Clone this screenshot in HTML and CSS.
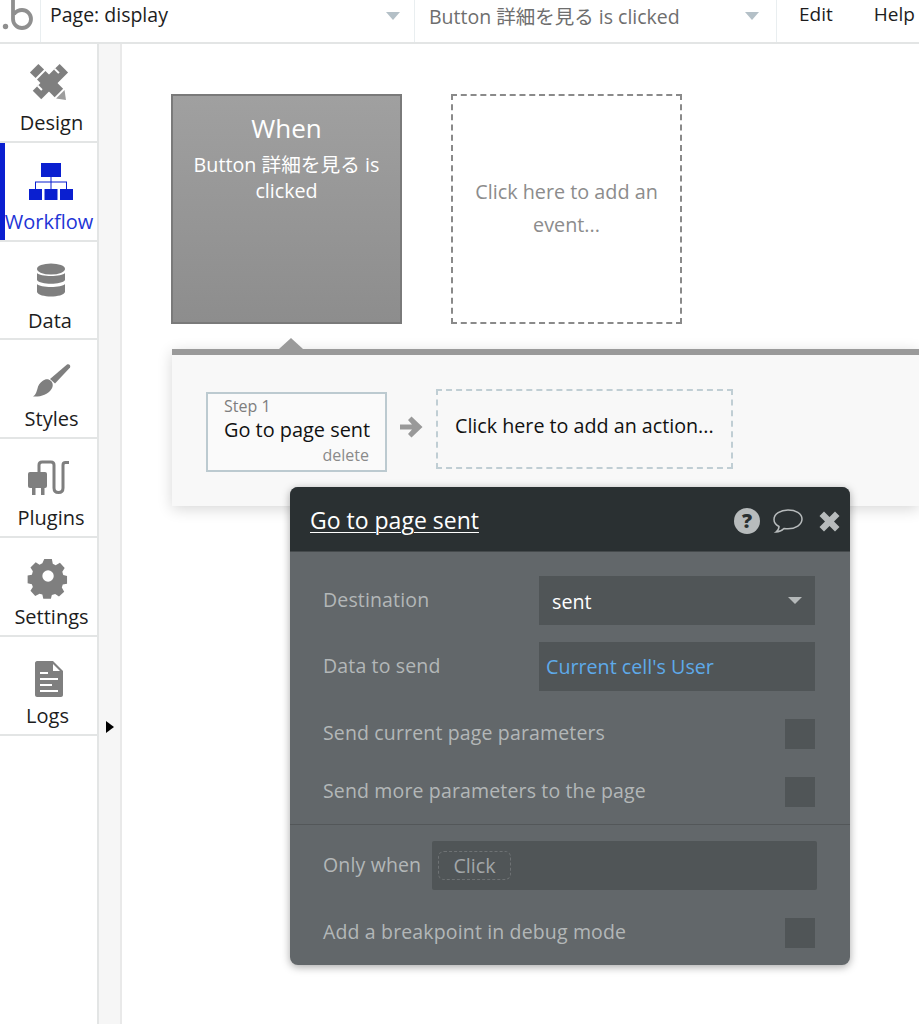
FILE: index.html
```html
<!DOCTYPE html>
<html lang="en">
<head>
<meta charset="utf-8">
<title>Workflow</title>
<link rel="stylesheet" href="styles.css">
</head>
<body>
<header class="topbar">
  <div class="logo">
    <svg width="40" height="42" viewBox="0 0 40 42"><circle cx="5.500" cy="26.500" r="2.700" fill="#8f8f8f"/><path d="M13 0V19a9 9 0 1 0 9-9c-3 0-6 1.500-8 4" fill="none" stroke="#8f8f8f" stroke-width="3.800"/></svg>
  </div>
  <div class="drop page-drop"><span>Page: display</span><i class="caret"></i></div>
  <div class="drop event-drop"><span>Button 詳細を見る is clicked</span><i class="caret"></i></div>
  <nav class="menu"><span>Edit</span><span>Help</span></nav>
</header>
<div class="main">
  <aside class="sidebar">
    <div class="tab tab-design">
      <svg class="icon" width="38" height="38" viewBox="0 0 38 38">
        <g transform="rotate(-45 19 18)" fill="#7f7f7f">
          <rect x="2" y="12" width="38" height="12"/>
          <g fill="#fff"><rect x="8" y="12" width="2" height="6"/><rect x="32" y="12" width="2" height="6"/></g>
        </g>
        <g transform="rotate(45 19 18)">
          <rect x="-2" y="12" width="8" height="12" fill="#7f7f7f"/>
          <rect x="8" y="12" width="25" height="12" fill="#7f7f7f"/>
          <path d="M35 12 43 18 35 24Z" fill="#9d9d9d"/>
        </g>
      </svg>
      <span>Design</span>
    </div>
    <div class="tab active">
      <svg class="icon" width="44" height="38" viewBox="0 2 44 38"><g fill="#0a1fd0"><rect x="12" y="1" width="20" height="14"/><rect x="0" y="27" width="13" height="11"/><rect x="15.500" y="27" width="13" height="11"/><rect x="31" y="27" width="13" height="11"/><path d="M21.500 15h1v4.500H38V27h-1v-6.500H22.500V27h-1v-6.500H7V27H6v-7.500h15.500Z"/></g></svg>
      <span>Workflow</span>
    </div>
    <div class="tab tab-data">
      <svg class="icon" width="30" height="38" viewBox="0 0 30 38"><g fill="#7f7f7f"><ellipse cx="15" cy="6" rx="14" ry="5.500"/><path d="M1 10c3 4 25 4 28 0v7c-3 5-25 5-28 0Z"/><path d="M1 21c3 4 25 4 28 0v8c-2 6-26 6-28 0Z"/></g></svg>
      <span>Data</span>
    </div>
    <div class="tab tab-styles">
      <svg class="icon" width="38" height="38" viewBox="0 -3 38 38"><g fill="#7f7f7f"><path d="M34 .500c2-1 4 1 3 3L22 19.500l-5-4.500Z"/><path d="M9.500 17c3-2.500 6-2.500 8.500 0 2 2 2.500 5 .5 8-4 6-11 8-18.500 7.500 3-1.500 3.500-5 4.500-8 .5-3 2.500-6 5-7.500Z"/></g></svg>
      <span>Styles</span>
    </div>
    <div class="tab tab-plugins">
      <svg class="icon" width="42" height="38" viewBox="0 2 42 38"><g fill="#7f7f7f"><rect x="0" y="14" width="19" height="16" rx="2"/><rect x="4" y="29" width="3.500" height="8"/><rect x="13" y="29" width="3.500" height="8"/></g><path d="M11 14V7q0-3 3-3H23q3 0 3 3V30q0 4.500 4.500 4.500T35 30V7q0-2.500 2.500-2.500H41" fill="none" stroke="#7f7f7f" stroke-width="3"/></svg>
      <span>Plugins</span>
    </div>
    <div class="tab tab-settings">
      <svg class="icon" width="38" height="38" viewBox="0 1 38 38"><path fill="#7f7f7f" fill-rule="evenodd" d="M15 1h8l1 5 3 1.500 4.500-2.500 5 5.500-2.500 4 1 3.500 4 1v8l-4.500 1-1 3 2.500 4.500-5.500 5-4-2.500-3.500 1-1 4h-8l-1-4.500-3-1-4.500 2.500-5-5.500 2.500-4-1-3-4.500-1v-8l4.500-1 1-3.500-2.500-4 5.500-5.500 4 2.500 3-1.500ZM19 13a6 6 0 1 0 0 12 6 6 0 0 0 0-12Z" transform="scale(.95)"/></svg>
      <span>Settings</span>
    </div>
    <div class="tab tab-logs">
      <svg class="icon" width="28" height="38" viewBox="0 -3 28 38"><path fill="#7f7f7f" d="M2 0h16l10 10v24c0 1-1 2-2 2H2c-1 0-2-1-2-2V2C0 1 1 0 2 0Z"/><g fill="#fff"><path d="M18 3l7 7h-7Z"/><rect x="5" y="11" width="8" height="2"/><rect x="5" y="17" width="18" height="2"/><rect x="5" y="23" width="12" height="2"/><rect x="5" y="29" width="18" height="2"/></g></svg>
      <span>Logs</span>
    </div>
  </aside>
  <div class="gutter"><i class="expander"></i></div>
  <main class="canvas">
    <div class="events">
      <div class="event-card selected">
        <div class="when">When</div>
        <div class="when-desc">Button 詳細を見る is clicked</div>
      </div>
      <div class="event-card empty">Click here to add an event...</div>
    </div>
    <section class="actions">
      <i class="notch"></i>
      <div class="step">
        <div class="step-num">Step 1</div>
        <div class="step-name">Go to page sent</div>
        <div class="step-del">delete</div>
      </div>
      <svg class="next" width="24" height="22" viewBox="0 0 24 22"><path fill="#999" d="M0 8.500h12L8 4l3.500-3.500L22.500 11 11.500 21.500 8 18l4-4.500H0Z"/></svg>
      <div class="add-action">Click here to add an action...</div>
    </section>
    <section class="popup">
      <div class="popup-head">
        <span class="popup-title">Go to page sent</span>
        <div class="popup-icons">
          <svg class="help" width="26" height="26" viewBox="0 0 26 26"><circle cx="13" cy="13" r="13" fill="#b7bbbc"/><text x="13" y="20" class="q">?</text></svg>
          <svg width="30" height="26" viewBox="0 0 30 26"><path d="M15 2C7.500 2 1 6 1 11.500c0 3 2 5.500 5 7 0 2-1 4-3 5.500 3 0 6-1.500 8-3.500 1.500.2 2.500.3 4 .3 7.500 0 14-4 14-9.800S22.500 2 15 2Z" fill="none" stroke="#b7bbbc" stroke-width="1.500"/></svg>
          <svg class="close" width="21" height="21" viewBox="0 0 21 21"><path fill="#b7bbbc" d="M5 .5 10.500 6 16 .5 20.500 5 15 10.500 20.500 16 16 20.500 10.500 15 5 20.500.5 16 6 10.500.5 5Z"/></svg>
        </div>
      </div>
      <div class="popup-body">
        <div class="row row-field">
          <label>Destination</label>
          <div class="input select"><span>sent</span><i class="caret light"></i></div>
        </div>
        <div class="row row-field second">
          <label>Data to send</label>
          <div class="input"><span class="link">Current cell's User</span></div>
        </div>
        <div class="row row-check first-check">
          <label>Send current page parameters</label><i class="check"></i>
        </div>
        <div class="row row-check">
          <label>Send more parameters to the page</label><i class="check"></i>
        </div>
        <hr class="divider">
        <div class="row only-when">
          <label>Only when</label>
          <div class="input wide"><span class="click">Click</span></div>
        </div>
        <div class="row row-check last-check">
          <label>Add a breakpoint in debug mode</label><i class="check"></i>
        </div>
      </div>
    </section>
  </main>
</div>
</body>
</html>
```

FILE: styles.css
```css
* { box-sizing: border-box; }
html, body { margin: 0; padding: 0; height: 100%; }
body {
  width: 919px;
  height: 1024px;
  overflow: hidden;
  background: #fff;
  font-family: "Open Sans", "Noto Sans CJK JP", sans-serif;
  color: #1d1d1d;
  display: flex;
  flex-direction: column;
}

/* top bar */
.topbar {
  flex: none;
  height: 44px;
  display: flex;
  border-bottom: 2px solid #e3e5e5;
  font-size: 19px;
  overflow: hidden;
}
.logo {
  width: 41px;
  flex: none;
  border-right: 1px solid #e9eef0;
}
.logo svg { display: block; }
.drop {
  flex: none;
  display: flex;
  align-items: center;
  justify-content: space-between;
  height: 100%;
  border-right: 1px solid #e9eef0;
  padding-bottom: 14px;
  font-size: 19.500px;
}
.page-drop { width: 374px; padding-left: 9px; padding-right: 14px; }
.event-drop { width: 362px; padding-left: 14px; padding-right: 17px; color: #6e6e6e; }
.event-drop span { padding-top: 2px; }
.caret {
  width: 0; height: 0;
  border-left: 7px solid transparent;
  border-right: 7px solid transparent;
  border-top: 8px solid #b4c0c7;
  margin-top: 3px;
}
.caret.light { border-top-color: #b5b9ba; border-top-width: 7px; margin-top: 0; }
.menu {
  flex: none;
  display: flex;
  gap: 41px;
  padding-left: 22px;
  padding-top: 1px;
  white-space: nowrap;
}

/* main */
.main { flex: 1; display: flex; min-height: 0; }
.sidebar { width: 99px; flex: none; border-right: 2px solid #e3e5e5; }
.tab {
  height: 98.800px;
  display: flex;
  flex-direction: column;
  align-items: center;
  border-bottom: 2px solid #e3e5e5;
  font-size: 20px;
  line-height: 27px;
  padding-top: 21px;
  position: relative;
}
.icon { display: block; margin-bottom: 6px; overflow: visible; }
.tab span { margin-left: 6px; }
.tab.active { color: #2234d6; }
.tab.active span { margin-left: 1px; }
.tab.active .icon { margin-left: 4px; }
.tab.active::before {
  content: "";
  position: absolute;
  left: 0; top: 0; bottom: 0;
  width: 5px;
  background: #0a1fd0;
}
.tab-data .icon { margin-left: 4px; }
.tab-data span { margin-left: 3px; }
.tab-styles .icon { margin-left: 7px; }
.tab-plugins .icon, .tab-settings .icon { margin-left: 1px; }
.tab-plugins span { margin-left: 5px; }
.tab-logs span { margin-left: -2px; }
.gutter {
  width: 23px;
  flex: none;
  background: #f6f6f6;
  border-right: 2px solid #e9e9e9;
  position: relative;
}
.expander {
  position: absolute;
  left: 7px;
  top: 677px;
  width: 0; height: 0;
  border-top: 6.500px solid transparent;
  border-bottom: 6.500px solid transparent;
  border-left: 8px solid #000;
}

/* canvas */
.canvas {
  flex: 1;
  min-width: 0;
  position: relative;
  padding-top: 50px;
  overflow: hidden;
}
.events { display: flex; gap: 49px; margin-left: 49px; }
.event-card {
  width: 231px;
  height: 230px;
  flex: none;
  text-align: center;
}
.event-card.selected {
  background: linear-gradient(#a0a0a0, #8d8d8d);
  border: 2px solid #7a7a7a;
  color: #fff;
  padding: 14px 14px 0;
}
.when { font-size: 26px; line-height: 36px; }
.when-desc { font-size: 19.700px; line-height: 26px; margin-top: 6px; }
.event-card.empty {
  border: 2px dashed #8a8a8a;
  color: #8c8c8c;
  font-size: 19.800px;
  line-height: 33px;
  padding: 79px 20px 0;
}
.actions {
  margin: 25px 0 0 50px;
  height: 157px;
  background: #f8f8f8;
  border-top: 6px solid #9a9a9a;
  display: flex;
  align-items: flex-start;
  position: relative;
  box-shadow: 0 3px 14px rgba(0,0,0,.16);
  padding: 37px 0 0 34px;
}
.notch {
  position: absolute;
  left: 107px;
  top: -17px;
  width: 0; height: 0;
  border-left: 12px solid transparent;
  border-right: 12px solid transparent;
  border-bottom: 11px solid #9a9a9a;
}
.step {
  width: 181px;
  height: 80px;
  flex: none;
  border: 2px solid #bccad0;
  background: #fafafa;
  padding: 2px 16px 0 16px;
}
.step-num { font-size: 16px; line-height: 20px; color: #7e7e7e; }
.step-name { font-size: 19.900px; line-height: 27px; color: #111; white-space: nowrap; }
.step-del { font-size: 16px; line-height: 22px; color: #8a8a8a; text-align: right; margin-top: 1px; }
.next { flex: none; margin: 24px 12px 0 13px; }
.add-action {
  width: 297px;
  height: 80px;
  flex: none;
  margin-top: -3px;
  border: 2px dashed #c0ced4;
  color: #111;
  font-size: 19.700px;
  line-height: 70px;
  padding-left: 17px;
  white-space: nowrap;
}

/* popup */
.popup {
  position: absolute;
  left: 168px;
  top: 443px;
  width: 560px;
  height: 478px;
  background: #62676a;
  border-radius: 8px;
  box-shadow: 0 2px 8px rgba(0,0,0,.35);
  overflow: hidden;
  color: #b3b7b8;
  font-size: 19.700px;
}
.popup-head {
  height: 65px;
  background: #2a3032;
  border-bottom: 1px solid #454a4c;
  display: flex;
  align-items: center;
  justify-content: space-between;
  padding: 2px 10px 0 20px;
}
.popup-title { color: #fff; font-size: 23px; text-decoration: underline; text-underline-offset: 3px; text-decoration-thickness: 1px; }
.popup-icons { display: flex; align-items: center; gap: 13px; margin-top: 2px; }
.popup-icons svg { display: block; overflow: visible; }
.popup-icons .close { margin-left: 3px; }
.q { fill: #2a3032; font-family: "Open Sans", sans-serif; font-weight: 800; font-size: 20px; text-anchor: middle; }
.popup-body { padding: 24px 35px 0 33px; }
.row { display: flex; align-items: center; justify-content: space-between; }
.row label { white-space: nowrap; letter-spacing: .15px; font-size: 19.500px; padding-bottom: 3px; }
.row-field { height: 49px; }
.row-field.second { margin-top: 17px; }
.input { background: #505557; height: 49px; display: flex; align-items: center; }
.row-field .input { width: 276px; padding: 0 13px 0 7px; }
.select { justify-content: space-between; color: #fff; }
.select span { padding: 2px 0 0 6px; }
.link { color: #5eaaea; }
.row-check { height: 30px; }
.first-check { margin-top: 28px; }
.row-check + .row-check { margin-top: 28px; }
.check { width: 30px; height: 30px; background: #505557; flex: none; }
.divider { margin: 17px -35px 0 -33px; border: 0; border-top: 1px solid #535759; height: 0; }
.only-when { margin-top: 16px; margin-right: -2px; }
.input.wide { width: 385px; padding-left: 6px; border-radius: 2px; }
.click {
  display: block;
  width: 73px;
  height: 29px;
  line-height: 27px;
  text-align: center;
  border: 1px dashed #6e7274;
  border-radius: 6px;
  color: #a2a6a8;
}
.last-check { margin-top: 28px; }
```
